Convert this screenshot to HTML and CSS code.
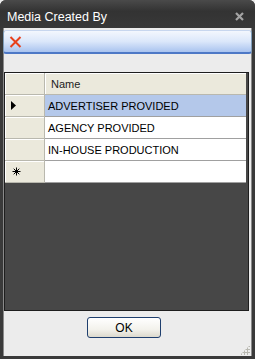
FILE: index.html
```html
<!DOCTYPE html>
<html lang="en">
<head>
    <meta charset="UTF-8">
    <title>Media Created By</title>
    <link rel="stylesheet" href="styles.css">
</head>
<body>
    <div class="window">
        <div class="titlebar">
            <span class="title">Media Created By</span>
            <svg class="close" width="9" height="9" viewBox="0 0 9 9">
                <path d="M1 1 L8 8 M8 1 L1 8" stroke="#a4a4a4" stroke-width="2.2" fill="none"/>
            </svg>
        </div>
        <div class="client">
            <div class="toolbar">
                <svg class="delete" width="13" height="12" viewBox="0 0 13 12">
                    <path d="M1.5 1 L11.5 11 M11.5 1 L1.5 11" stroke="#e8401c" stroke-width="2" fill="none"/>
                </svg>
            </div>
            <div class="grid">
                <div class="row head">
                    <span class="rowhead"></span>
                    <span class="cell">Name</span>
                </div>
                <div class="row selected">
                    <span class="rowhead"><svg width="5" height="9" viewBox="0 0 5 9"><path d="M0 0 L5 4.5 L0 9 Z" fill="#000"/></svg></span>
                    <span class="cell">ADVERTISER PROVIDED</span>
                </div>
                <div class="row">
                    <span class="rowhead"></span>
                    <span class="cell">AGENCY PROVIDED</span>
                </div>
                <div class="row">
                    <span class="rowhead"></span>
                    <span class="cell">IN-HOUSE PRODUCTION</span>
                </div>
                <div class="row">
                    <span class="rowhead star">
                        <svg width="9" height="9" viewBox="0 0 9 9">
                            <path d="M4.5 0.5 V8.5 M0.5 4.5 H8.5 M1.7 1.7 L7.3 7.3 M7.3 1.7 L1.7 7.3" stroke="#000" stroke-width="1" fill="none"/>
                        </svg>
                    </span>
                    <span class="cell"></span>
                </div>
            </div>
            <div class="footer">
                <button class="ok">OK</button>
                <span class="grip"></span>
            </div>
        </div>
    </div>
</body>
</html>
```

FILE: styles.css
```css
body {
    margin: 0;
    background: #ececec;
}
* { box-sizing: border-box; }
.window {
    width: 255px;
    height: 359px;
    display: flex;
    flex-direction: column;
    background: #3a3a3a;
    border-radius: 6px 6px 0 0;
    padding: 0 3px 3px 3px;
}
.titlebar {
    height: 28px;
    display: flex;
    align-items: center;
    justify-content: space-between;
    margin: 0 -3px;
    padding: 5px 11px 0 7px;
    background: linear-gradient(#4a4a4a, #333 40%, #383838);
    border-radius: 6px 6px 0 0;
}
.title {
    color: #fff;
    font-family: "Liberation Sans", Arial, sans-serif;
    font-size: 12.5px;
}
.client {
    flex: 1;
    display: flex;
    flex-direction: column;
    background: #ececec;
    border-left: 1px solid #8a8a8a;
    border-right: 1px solid #8a8a8a;
    padding-top: 2px;
}
.toolbar {
    height: 24px;
    margin: 0 -1px;
    border: 1px solid #7f9db9;
    border-top-color: #c7d6ee;
    border-bottom: 2px solid #4d78c6;
    border-radius: 3px;
    background: linear-gradient(#f3f7fd, #dbe7fa 50%, #a9c3ef);
    display: flex;
    align-items: center;
    padding-left: 5px;
}
.grid {
    margin: 18px 2px 0 0;
    height: 239px;
    background: #474747;
    border: 1px solid #1e1e1e;
    font-family: "Liberation Sans", Arial, sans-serif;
    font-size: 11px;
    color: #000;
}
.row {
    display: flex;
    height: 22px;
    width: 241px;
}
.rowhead {
    width: 40px;
    background: #ebe9dc;
    border-right: 1px solid #b9b8ae;
    border-bottom: 1px solid #b9b8ae;
    box-shadow: inset 1px 1px 0 #fff;
    display: flex;
    align-items: center;
    padding-left: 6px;
}
.cell {
    flex: 1;
    background: #fff;
    border-bottom: 1px solid #a0a0a0;
    display: flex;
    align-items: center;
    padding-left: 3px;
}
.head .cell {
    background: #ebe9dc;
    border-bottom: 1px solid #b9b8ae;
    box-shadow: inset 1px 1px 0 #fff;
    color: #222;
    padding-left: 6px;
}
.selected .cell { background: #b4c8ea; }
.star { padding-left: 7px; }
.footer {
    flex: 1;
    display: flex;
    justify-content: center;
    align-items: flex-start;
    padding-top: 6px;
    position: relative;
}
.ok {
    width: 74px;
    height: 21px;
    border: 1px solid #1f3f6e;
    border-radius: 3px;
    background: linear-gradient(#ffffff, #f3f2ec 60%, #dcd9cd);
    font-family: "Liberation Sans", Arial, sans-serif;
    font-size: 12px;
    color: #000;
    padding: 0;
    margin-right: 7px;
}
.grip {
    position: absolute;
    right: 1px;
    bottom: 1px;
    width: 10px;
    height: 10px;
    background-image: radial-gradient(circle, #b8b8b0 1px, transparent 1.2px);
    background-size: 3px 3px;
    clip-path: polygon(100% 0, 100% 100%, 0 100%);
}
```
